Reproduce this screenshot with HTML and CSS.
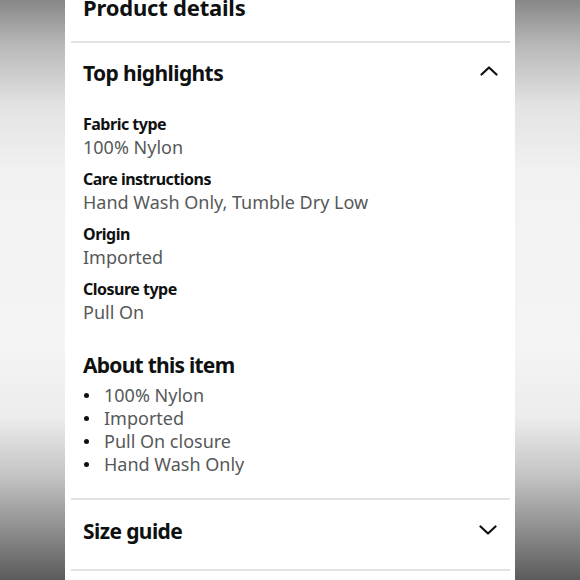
FILE: index.html
```
<!DOCTYPE html>
<html lang="en">
<head>
<meta charset="utf-8">
<title>Product details</title>
<link rel="stylesheet" href="styles.css">
</head>
<body>
<main class="card">
  <h1 class="page-title">Product details</h1>
  <hr class="divider">
  <section class="accordion">
    <div class="acc-head">
      <h2 class="acc-title">Top highlights</h2>
      <svg class="chev chev-up" width="18" height="10" viewBox="0 0 18 10" aria-hidden="true"><polyline points="1.5,8.5 9,1.5 16.5,8.5" fill="none" stroke="#0f1111" stroke-width="2.2" stroke-linecap="round" stroke-linejoin="round"/></svg>
    </div>
    <dl class="facts">
      <div class="fact"><dt>Fabric type</dt><dd>100% Nylon</dd></div>
      <div class="fact"><dt>Care instructions</dt><dd>Hand Wash Only, Tumble Dry Low</dd></div>
      <div class="fact"><dt>Origin</dt><dd>Imported</dd></div>
      <div class="fact"><dt>Closure type</dt><dd>Pull On</dd></div>
    </dl>
    <h3 class="about-title">About this item</h3>
    <ul class="bullets">
      <li>100% Nylon</li>
      <li>Imported</li>
      <li>Pull On closure</li>
      <li>Hand Wash Only</li>
    </ul>
  </section>
  <hr class="divider">
  <section class="accordion">
    <div class="acc-head acc-head-closed">
      <h2 class="acc-title">Size guide</h2>
      <svg class="chev chev-down" width="18" height="10" viewBox="0 0 18 10" aria-hidden="true"><polyline points="1.5,1.5 9,8.5 16.5,1.5" fill="none" stroke="#0f1111" stroke-width="2.2" stroke-linecap="round" stroke-linejoin="round"/></svg>
    </div>
  </section>
  <hr class="divider">
</main>
</body>
</html>
```
FILE: styles.css
```
* { box-sizing: border-box; }

html, body {
  margin: 0;
  padding: 0;
  height: 100%;
  overflow: hidden;
}

body {
  font-family: "Noto Sans", "Open Sans", sans-serif;
  color: #0f1111;
  background: linear-gradient(to bottom,
    #878787 0%,
    #b9b9b9 8%,
    #e2e2e2 18%,
    #f2f2f2 30%,
    #f4f4f4 60%,
    #ececec 72%,
    #c4c4c4 82%,
    #8a8a8a 92%,
    #5b5b5b 100%);
}

.card {
  width: 450px;
  min-height: 100%;
  margin: 0 auto;
  background: #ffffff;
  padding: 0 17px 0 18px;
  display: flex;
  flex-direction: column;
}

.page-title {
  margin: -7px 0 0;
  font-size: 22px;
  line-height: 28px;
  font-weight: 700;
  letter-spacing: -0.2px;
}

.divider {
  margin: 0 -12px;
  border: 0;
  height: 2px;
  background: #e3e3e3;
}

.page-title + .divider { margin-top: 20px; }

.acc-head {
  display: flex;
  justify-content: space-between;
  align-items: center;
  padding-top: 16px;
}

.acc-head-closed {
  padding-top: 17px;
  padding-bottom: 24px;
}

.acc-title {
  margin: 0;
  font-size: 21px;
  line-height: 28px;
  font-weight: 700;
  letter-spacing: -0.6px;
}

.chev { margin-top: -4px; }
.chev-down { margin-top: -3px; margin-right: 1px; }

.facts {
  margin: 26px 0 0;
  display: flex;
  flex-direction: column;
  gap: 9px;
}

.fact dt {
  font-size: 16px;
  line-height: 23px;
  font-weight: 700;
  letter-spacing: -0.5px;
}

.fact dd {
  margin: 0;
  font-size: 18px;
  line-height: 23px;
  color: #565959;
}

.about-title {
  margin: 27px 0 0;
  font-size: 21px;
  line-height: 28px;
  font-weight: 700;
  letter-spacing: -0.75px;
}

.bullets {
  list-style: none;
  margin: 5px 0 22px;
  padding: 0;
}

.bullets li {
  display: flex;
  align-items: center;
  gap: 15px;
  font-size: 18px;
  line-height: 23px;
  color: #565959;
}

.bullets li::before {
  content: "";
  width: 5px;
  height: 5px;
  margin-left: 1px;
  border-radius: 50%;
  background: #0f1111;
  flex: none;
}
```
